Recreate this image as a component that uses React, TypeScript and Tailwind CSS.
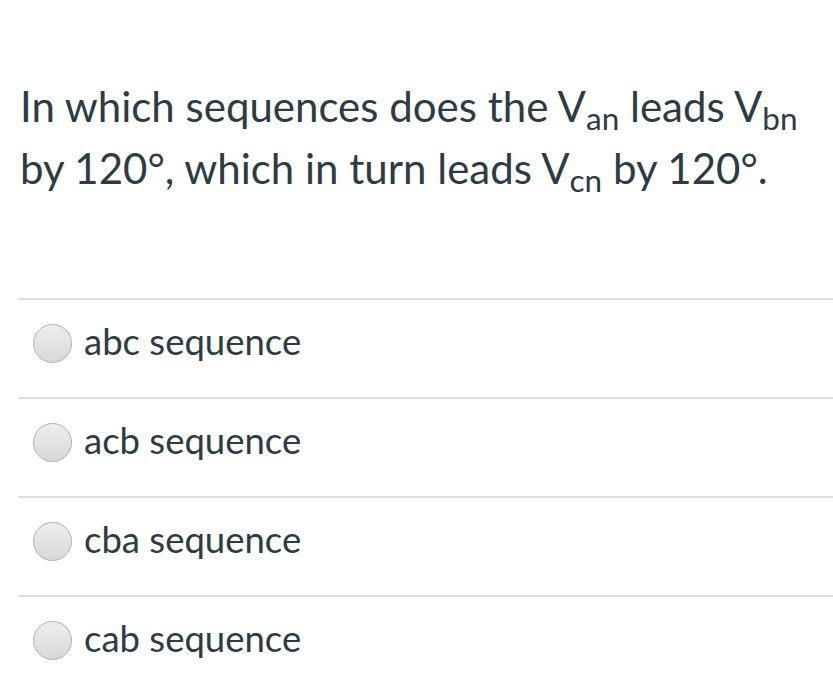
const options = ["abc sequence", "acb sequence", "cba sequence", "cab sequence"];

function Radio() {
  return (
    <span className="h-[39px] w-[39px] shrink-0 rounded-full border border-[#b0b0b0] bg-gradient-to-b from-[#eeeeee] to-[#d8d8d8]" />
  );
}

export default function App() {
  return (
    <div className="h-[688px] w-[833px] overflow-hidden bg-white font-['Lato','Open_Sans',sans-serif] text-[#2d3b45]">
      <div className="pl-[20px] pt-[75px] text-[42px] leading-[62px] whitespace-nowrap">
        <p>
          In which sequences does the V<sub>an</sub> leads V<sub>bn</sub>
          <br />
          by 120°, which in turn leads V<sub>cn</sub> by 120°.
        </p>
      </div>
      <div className="ml-[19px] mt-[99px]">
        {options.map((o) => (
          <div
            key={o}
            className="flex h-[99px] items-start gap-[12px] border-t-2 border-[#dddddd] pl-[14px] pt-[24px]"
          >
            <Radio />
            <span className="-mt-[5px] text-[36.5px] leading-[44px]">{o}</span>
          </div>
        ))}
      </div>
    </div>
  );
}
